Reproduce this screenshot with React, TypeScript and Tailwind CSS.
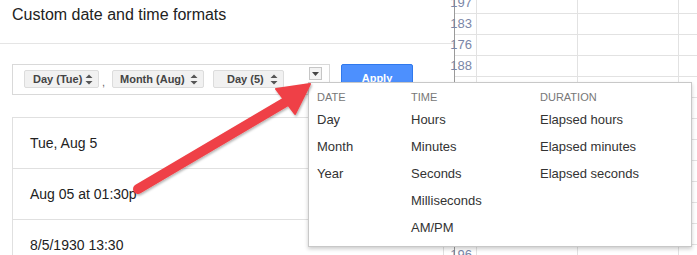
const gridNums = ["197", "183", "176", "188", "", "", "", "", "", "", "", "", "196"];

const previews = ["Tue, Aug 5", "Aug 05 at 01:30p", "8/5/1930 13:30"];

const menuCols = [
  { title: "DATE", width: "w-[94px]", items: ["Day", "Month", "Year"] },
  { title: "TIME", width: "w-[129px]", items: ["Hours", "Minutes", "Seconds", "Milliseconds", "AM/PM"] },
  { title: "DURATION", width: "flex-1", items: ["Elapsed hours", "Elapsed minutes", "Elapsed seconds"] },
];

function UpDown() {
  return (
    <svg width="8" height="11" viewBox="0 0 8 11">
      <path d="M4 0.5 L7.5 4 L0.5 4Z M0.5 7 L7.5 7 L4 10.5Z" fill="#555" />
    </svg>
  );
}

function Chip({ label, w, pl }: { label: string; w: string; pl: string }) {
  return (
    <div
      className={`flex h-[18px] ${w} ${pl} items-center justify-between rounded-[2px] border border-[#dcdcdc] bg-[#f1f1f1] pr-[5px] text-[11px] font-bold text-[#444]`}
    >
      <span>{label}</span>
      <UpDown />
    </div>
  );
}

//////////////// the dialog on the left ////////////////
const Dialog = () => {
  return (
    <div className="flex h-full w-[455px] shrink-0 flex-col border-r border-[#9a9a9a] bg-white">
      <div className="h-[44px] shrink-0 border-b border-[#e5e5e5] pl-[12px] pt-[5px] text-[16px] leading-[20px] text-[#222]">
        Custom date and time formats
      </div>

      <div className="mt-[20px] flex shrink-0 items-start pl-[12px]">
        {/* format input */}
        <div className="flex h-[31px] w-[318px] items-start border border-[#d9d9d9] pl-[11px] pr-[7px] pt-[5px]">
          <Chip label="Day (Tue)" w="w-[75px]" pl="pl-[8px]" />
          <span className="w-[13px] pl-[3px] pt-[4px] text-[11px] text-[#666]">,</span>
          <Chip label="Month (Aug)" w="w-[92px]" pl="pl-[7px]" />
          <div className="w-[9px]" />
          <Chip label="Day (5)" w="w-[71px]" pl="pl-[13px]" />
          <div className="ml-auto mt-[-3px] flex h-[13px] w-[13px] items-center justify-center border border-[#c6c6c6] bg-[#f3f3f3]">
            <svg width="7" height="4" viewBox="0 0 7 4">
              <path d="M0 0 L7 0 L3.5 4Z" fill="#444" />
            </svg>
          </div>
        </div>

        <button className="ml-[11px] h-[29px] w-[72px] rounded-[2px] border border-[#3079ed] bg-[#4d90fe] text-[11px] font-bold text-white">
          Apply
        </button>
      </div>

      {/* previews */}
      <div className="ml-[12px] mt-[22px] w-[432px] shrink-0 border border-[#e0e0e0]">
        {previews.map((p, i) => (
          <div
            key={p}
            className={`flex h-[51px] items-center pl-[17px] text-[14px] text-[#222] ${i < previews.length - 1 ? "border-b border-[#e0e0e0]" : ""}`}
          >
            {p}
          </div>
        ))}
      </div>
    </div>
  );
};

//////////////// sheet behind ////////////////
const Sheet = () => {
  return (
    <div className="-mt-[7px] flex flex-1 flex-col">
      {gridNums.map((n, i) => (
        <div key={i} className="flex h-[21px] shrink-0 border-b border-[#e2e2e2]">
          <div className="flex w-[22px] items-center justify-end border-r border-[#e2e2e2] pr-[4px] text-[13px] text-[#7a86a8]">
            {n}
          </div>
          <div className="w-[101px] border-r border-[#e2e2e2]" />
          <div className="w-[101px] border-r border-[#e2e2e2]" />
          <div className="w-[101px] border-r border-[#e2e2e2]" />
        </div>
      ))}
    </div>
  );
};

export default function App() {
  return (
    <div
      className="relative flex h-[255px] w-[697px] overflow-hidden bg-white"
      style={{ fontFamily: '"Liberation Sans", Arial, sans-serif' }}
    >
      <Dialog />
      <Sheet />

      {/* dropdown menu */}
      <div className="absolute left-[308px] top-[82px] flex h-[165px] w-[384px] border border-[#c8c8c8] bg-white pl-[8px] pt-[6px] shadow-[0_2px_4px_rgba(0,0,0,0.2)]">
        {menuCols.map((col) => (
          <div key={col.title} className={col.width}>
            <div className="h-[17px] text-[11px] leading-[16px] text-[#777]">{col.title}</div>
            {col.items.map((it) => (
              <div key={it} className="h-[27px] text-[13px] leading-[27px] text-[#333]">
                {it}
              </div>
            ))}
          </div>
        ))}
      </div>

      {/* red arrow */}
      <svg className="pointer-events-none absolute left-0 top-0" width="697" height="255" viewBox="0 0 697 255">
        <defs>
          <filter id="sh" x="-10%" y="-10%" width="130%" height="130%">
            <feDropShadow dx="1" dy="1.5" stdDeviation="1.2" floodColor="#000" floodOpacity="0.3" />
          </filter>
        </defs>
        <g filter="url(#sh)">
          <line x1="138" y1="189" x2="289" y2="100" stroke="#ef4146" strokeWidth="10" strokeLinecap="round" />
          <polygon points="310,84 276,89 295,114" fill="#ef4146" stroke="#ef4146" strokeWidth="2" strokeLinejoin="round" />
        </g>
      </svg>
    </div>
  );
}
